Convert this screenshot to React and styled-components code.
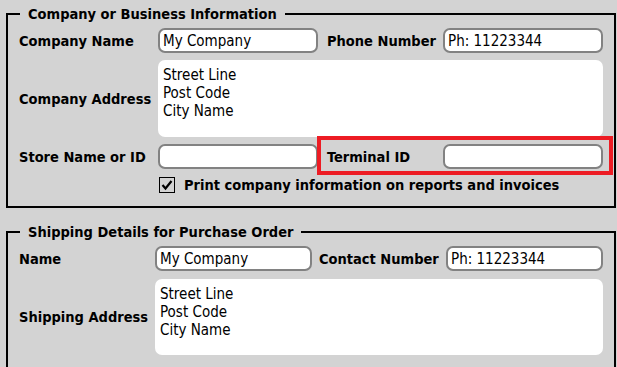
import React from "react";
import styled, { createGlobalStyle } from "styled-components";

const Global = createGlobalStyle`
  html, body { margin: 0; padding: 0; overflow: hidden; background: #d3d3d3; }
  body { font-family: "DejaVu Sans Condensed", "DejaVu Sans", sans-serif; color: #000; }
`;

const Page = styled.div`
  width: 617px;
  height: 367px;
  box-sizing: border-box;
  padding: 5px 1px 0 6px;
  background: #d3d3d3;
  display: flex;
  flex-direction: column;
  gap: 15px;
`;

const Group = styled.fieldset`
  margin: 0;
  width: 610px;
  box-sizing: border-box;
  border: 2px solid #000;
  padding: 5px 11px ${(p) => p.$pb}px 11px;
  min-width: 0;
`;

const Legend = styled.legend`
  margin-left: 1px;
  padding: 0 8px;
  font-weight: bold;
  font-size: 14.5px;
  line-height: 18px;
`;

const Grid = styled.div`
  display: grid;
  grid-template-columns: ${(p) => p.$cols};
  grid-template-rows: ${(p) => p.$rows};
  row-gap: ${(p) => p.$gap}px;
  align-items: center;
`;

const Label = styled.label`
  font-weight: bold;
  font-size: 14.5px;
  white-space: nowrap;
  padding-left: ${(p) => p.$indent || 0}px;
`;

const Input = styled.input`
  box-sizing: border-box;
  height: 25px;
  width: 100%;
  border: 2px solid #828282;
  border-radius: 7px;
  background: #fff;
  padding: 0 3px;
  font: inherit;
  font-size: 15px;
  color: #000;
  outline: none;
`;

const Area = styled.textarea`
  box-sizing: border-box;
  grid-column: 2 / 5;
  height: ${(p) => p.$h}px;
  width: 100%;
  border: none;
  border-radius: 7px;
  background: #fff;
  padding: 6px 5px 5px;
  font: inherit;
  font-size: 15px;
  line-height: 18px;
  color: #000;
  resize: none;
  outline: none;
  overflow: hidden;
`;

const Highlight = styled.div`
  grid-column: 3 / 5;
  position: relative;
  display: grid;
  grid-template-columns: 125px 160px;
  align-items: center;
`;

const RedFrame = styled.span`
  position: absolute;
  left: -1px;
  right: -10px;
  top: -8px;
  bottom: -6px;
  border: 4px solid #ed1c24;
  pointer-events: none;
`;

const CheckRow = styled.label`
  grid-column: 2 / 5;
  display: flex;
  align-items: center;
  gap: 9px;
  padding-left: 1px;
  margin-top: 1px;
  font-weight: bold;
  font-size: 14.5px;
`;

const Box = styled.span`
  width: 16px;
  height: 16px;
  box-sizing: border-box;
  border: 1px solid #000;
  background: #d3d3d3;
  display: flex;
  align-items: center;
  justify-content: center;
`;

export default function App() {
  return (
    <>
      <Global />
      <Page>
        <Group $pb={13}>
          <Legend>Company or Business Information</Legend>
          <Grid $cols="139px 160px 125px 160px" $rows="25px 77px 25px auto" $gap={7}>
            <Label>Company Name</Label>
            <Input defaultValue="My Company" />
            <Label $indent={9}>Phone Number</Label>
            <Input defaultValue="Ph: 11223344" />

            <Label>Company Address</Label>
            <Area $h={77} defaultValue={"Street Line\nPost Code\nCity Name"} />

            <Label>Store Name or ID</Label>
            <Input defaultValue="" />
            <Highlight>
              <Label $indent={9}>Terminal ID</Label>
              <Input defaultValue="" />
              <RedFrame />
            </Highlight>

            <CheckRow>
              <Box>
                <svg width="14" height="14" viewBox="0 0 14 14">
                  <path d="M2.5 7 L5.5 10.5 L11.5 3" fill="none" stroke="#000" strokeWidth="2.2" />
                </svg>
              </Box>
              Print company information on reports and invoices
            </CheckRow>
          </Grid>
        </Group>

        <Group $pb={14}>
          <Legend>Shipping Details for Purchase Order</Legend>
          <Grid $cols="136px 157px 134px 157px" $rows="25px 76px" $gap={8}>
            <Label>Name</Label>
            <Input defaultValue="My Company" />
            <Label $indent={7}>Contact Number</Label>
            <Input defaultValue="Ph: 11223344" />

            <Label>Shipping Address</Label>
            <Area $h={76} defaultValue={"Street Line\nPost Code\nCity Name"} />
          </Grid>
        </Group>
      </Page>
    </>
  );
}
